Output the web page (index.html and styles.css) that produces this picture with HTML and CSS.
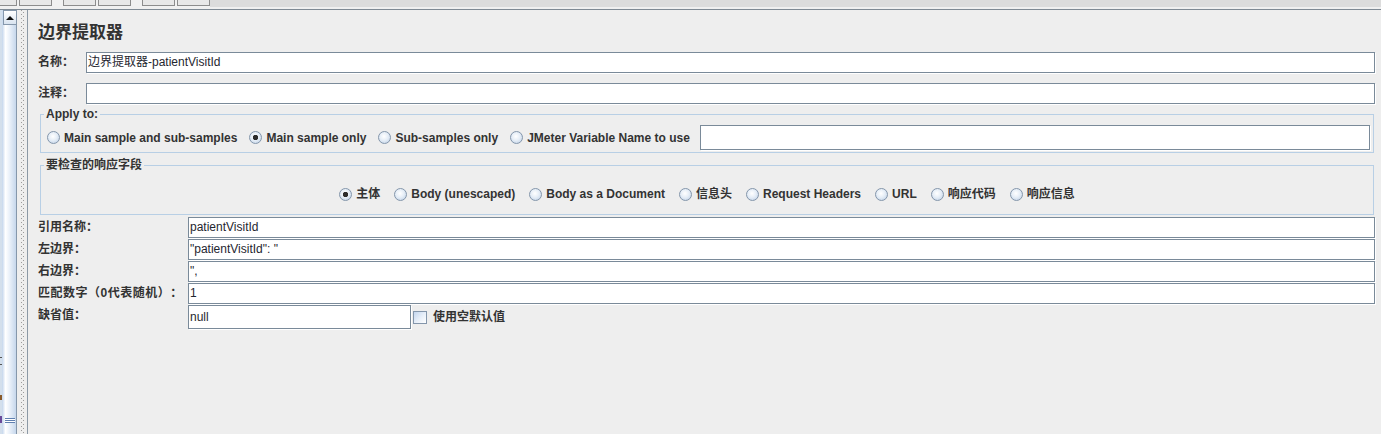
FILE: index.html
```html
<!DOCTYPE html>
<html lang="zh-CN">
<head>
<meta charset="utf-8">
<title>边界提取器</title>
<link rel="stylesheet" href="styles.css">
</head>
<body>
<div class="toolbar">
  <div class="tb-group">
    <span class="tb-btn first"></span>
    <span class="tb-btn gap-s"></span>
    <span class="tb-btn gap-l"></span>
    <span class="tb-btn gap-s"></span>
    <span class="tb-btn gap-l"></span>
    <span class="tb-btn gap-s"></span>
  </div>
</div>
<div class="workspace">
  <div class="tree-edge">
    <span class="bit bit-dark"></span>
    <span class="bit bit-brown"></span>
    <span class="bit bit-purple"></span>
  </div>
  <div class="vscroll">
    <div class="scroll-up"><span class="arrow"></span></div>
    <div class="scroll-track">
      <span class="grip"></span>
    </div>
  </div>
  <div class="splitter"></div>
  <div class="panel">
    <h1 class="title">边界提取器</h1>
    <div class="row name-row">
      <span class="lbl lbl-short">名称：</span>
      <div class="field">边界提取器-patientVisitId</div>
    </div>
    <div class="row comment-row">
      <span class="lbl lbl-short">注释：</span>
      <div class="field"></div>
    </div>
    <fieldset class="group group-apply">
      <legend>Apply to:</legend>
      <div class="apply-row">
        <span class="radio"><span class="dot"></span>Main sample and sub-samples</span>
        <span class="radio"><span class="dot on"></span>Main sample only</span>
        <span class="radio"><span class="dot"></span>Sub-samples only</span>
        <span class="radio"><span class="dot"></span>JMeter Variable Name to use</span>
        <div class="var-field"></div>
      </div>
    </fieldset>
    <fieldset class="group group-fields">
      <legend>要检查的响应字段</legend>
      <div class="fields-row">
        <span class="radio"><span class="dot on"></span>主体</span>
        <span class="radio"><span class="dot"></span>Body (unescaped)</span>
        <span class="radio"><span class="dot"></span>Body as a Document</span>
        <span class="radio"><span class="dot"></span>信息头</span>
        <span class="radio"><span class="dot"></span>Request Headers</span>
        <span class="radio"><span class="dot"></span>URL</span>
        <span class="radio"><span class="dot"></span>响应代码</span>
        <span class="radio"><span class="dot"></span>响应信息</span>
      </div>
    </fieldset>
    <div class="props">
      <div class="prow">
        <span class="lbl lbl-long">引用名称：</span>
        <div class="field">patientVisitId</div>
      </div>
      <div class="prow">
        <span class="lbl lbl-long">左边界：</span>
        <div class="field">"patientVisitId": "</div>
      </div>
      <div class="prow">
        <span class="lbl lbl-long">右边界：</span>
        <div class="field">",</div>
      </div>
      <div class="prow">
        <span class="lbl lbl-long lbl-match">匹配数字（0代表随机）：</span>
        <div class="field">1</div>
      </div>
      <div class="prow">
        <span class="lbl lbl-long">缺省值：</span>
        <div class="field short">null</div>
        <span class="check"><span class="box"></span>使用空默认值</span>
      </div>
    </div>
  </div>
</div>
</body>
</html>
```
FILE: styles.css
```css
html, body {
  margin: 0;
  padding: 0;
}
body {
  width: 1381px;
  height: 434px;
  overflow: hidden;
  background: #eeeeee;
  font-family: "Liberation Sans", "Noto Sans CJK SC", sans-serif;
  font-size: 12px;
  color: #333333;
  text-spacing-trim: space-all;
}

/* top toolbar strip */
.toolbar {
  height: 7px;
  display: flex;
  background: #dcdcdc;
  border-bottom: 2px solid #f0f0f0;
}
.tb-group {
  display: flex;
  width: 210px;
  background: #f1f1f1;
}
.tb-btn {
  box-sizing: border-box;
  width: 33px;
  height: 6px;
  border: 1px solid #8d8d8d;
  border-top: 0;
  background: #e8e8e8;
}
.tb-btn.first {
  width: 17px;
  border-left: 0;
}
.tb-btn.gap-s { margin-left: 2px; }
.tb-btn.gap-l { margin-left: 11px; }

/* workspace */
.workspace {
  display: flex;
  height: 424px;
  border-top: 1px solid #7f8a94;
}
.tree-edge {
  width: 2px;
  background: #d3dfec;
  display: flex;
  flex-direction: column;
}
.bit { display: block; width: 2px; }
.bit-dark { height: 8px; margin-top: 347px; border-top: 1px solid #555; border-bottom: 1px solid #555; box-sizing: border-box; }
.bit-brown { height: 5px; margin-top: 30px; background: #8a5a2a; }
.bit-purple { height: 7px; margin-top: 16px; background: #6a4a9a; }

.vscroll {
  width: 14px;
  border-right: 1px solid #8597ab;
  display: flex;
  flex-direction: column;
  background: linear-gradient(to right, #c3d5ec 0, #ffffff 25%, #e9f0f9 55%, #c6d7ec 100%);
}
.scroll-up {
  box-sizing: border-box;
  height: 15px;
  margin-left: 1px;
  border: 1px solid #8597ab;
  border-right: 0;
  background: linear-gradient(to bottom, #ffffff, #d8e3f0);
  display: flex;
  align-items: center;
  justify-content: center;
}
.arrow {
  width: 0;
  height: 0;
  border-left: 4px solid transparent;
  border-right: 4px solid transparent;
  border-bottom: 4px solid #111;
}
.scroll-track {
  flex: 1;
  display: flex;
  flex-direction: column;
  align-items: center;
}
.grip {
  display: block;
  width: 10px;
  height: 5px;
  margin-top: auto;
  margin-bottom: 11px;
  margin-left: 2px;
  background: repeating-linear-gradient(to bottom, #5f7fb0 0 1px, #ffffff 1px 2px);
}

.splitter {
  width: 10px;
  border-right: 1px solid #8c99a6;
  background-image:
    linear-gradient(#9a9a9a 1px, transparent 1px),
    linear-gradient(#9a9a9a 1px, transparent 1px);
  background-size: 1px 4px, 1px 4px;
  background-position: 4px 0, 6px 2px;
  background-repeat: repeat-y, repeat-y;
}

/* main panel */
.panel {
  flex: 1;
  min-width: 0;
  padding: 11px 6px 0 10px;
  display: flex;
  flex-direction: column;
}
.title {
  margin: 0;
  font-family: "Noto Sans CJK SC", sans-serif;
  font-size: 17px;
  line-height: 20px;
  font-weight: bold;
  color: #333333;
}
.row {
  display: flex;
  align-items: flex-start;
}
.name-row { margin-top: 11px; }
.comment-row { margin-top: 10px; }
.lbl {
  font-weight: bold;
  line-height: 21px;
  white-space: nowrap;
  color: #333333;
}
.lbl-short { width: 48px; }
.lbl-long { width: 150px; }
.lbl-match { letter-spacing: 0.5px; }
.field {
  flex: 1;
  box-sizing: border-box;
  height: 21px;
  border: 1px solid #7a8a99;
  background: #ffffff;
  box-shadow: 1px 1px 0 #ffffff;
  padding-left: 1px;
  line-height: 19px;
  color: #1f2630;
  white-space: nowrap;
  overflow: hidden;
}

/* fieldsets */
.group {
  margin: 3px 1px 0 2px;
  padding: 0;
  border: 1px solid #b8cfe5;
  min-width: 0;
}
.group legend {
  margin-left: 3px;
  padding: 0 2px;
  font-weight: bold;
  line-height: 14px;
  color: #333333;
}
.group-fields { margin-top: 5px; }
.apply-row {
  display: flex;
  align-items: center;
  gap: 12px;
  padding: 4px 3px 2px 6px;
}
.fields-row {
  display: flex;
  align-items: center;
  justify-content: center;
  gap: 14px;
  padding: 14px 0 12px;
}
.radio {
  display: flex;
  align-items: center;
  gap: 4px;
  font-weight: bold;
  line-height: 16px;
  white-space: nowrap;
}
.dot {
  display: block;
  box-sizing: border-box;
  width: 13px;
  height: 13px;
  border-radius: 50%;
  border: 1px solid #8496ab;
  background: radial-gradient(circle at 45% 40%, #ffffff 0, #e6eef7 45%, #b9cce3 100%);
}
.dot.on {
  background:
    radial-gradient(circle, #2c2c2c 0 2.4px, transparent 3px),
    radial-gradient(circle at 45% 40%, #ffffff 0, #e6eef7 45%, #b9cce3 100%);
}
.var-field {
  flex: 1;
  box-sizing: border-box;
  height: 25px;
  margin-left: -2px;
  border: 1px solid #7a8a99;
  background: #ffffff;
  box-shadow: 1px 1px 0 #ffffff;
}

/* property rows */
.props {
  margin-top: 2px;
  display: flex;
  flex-direction: column;
}
.prow {
  display: flex;
  align-items: flex-start;
  margin-bottom: 1px;
}
.field.short {
  flex: none;
  width: 223px;
  height: 24px;
  line-height: 22px;
}
.check {
  align-self: center;
  display: flex;
  align-items: center;
  gap: 6px;
  margin-left: 2px;
  font-weight: bold;
  line-height: 16px;
}
.box {
  display: block;
  box-sizing: border-box;
  width: 14px;
  height: 13px;
  border: 1px solid #8496ab;
  background: linear-gradient(135deg, #c4d6ee 0, #e9f0f9 55%, #ffffff 100%);
}
```
